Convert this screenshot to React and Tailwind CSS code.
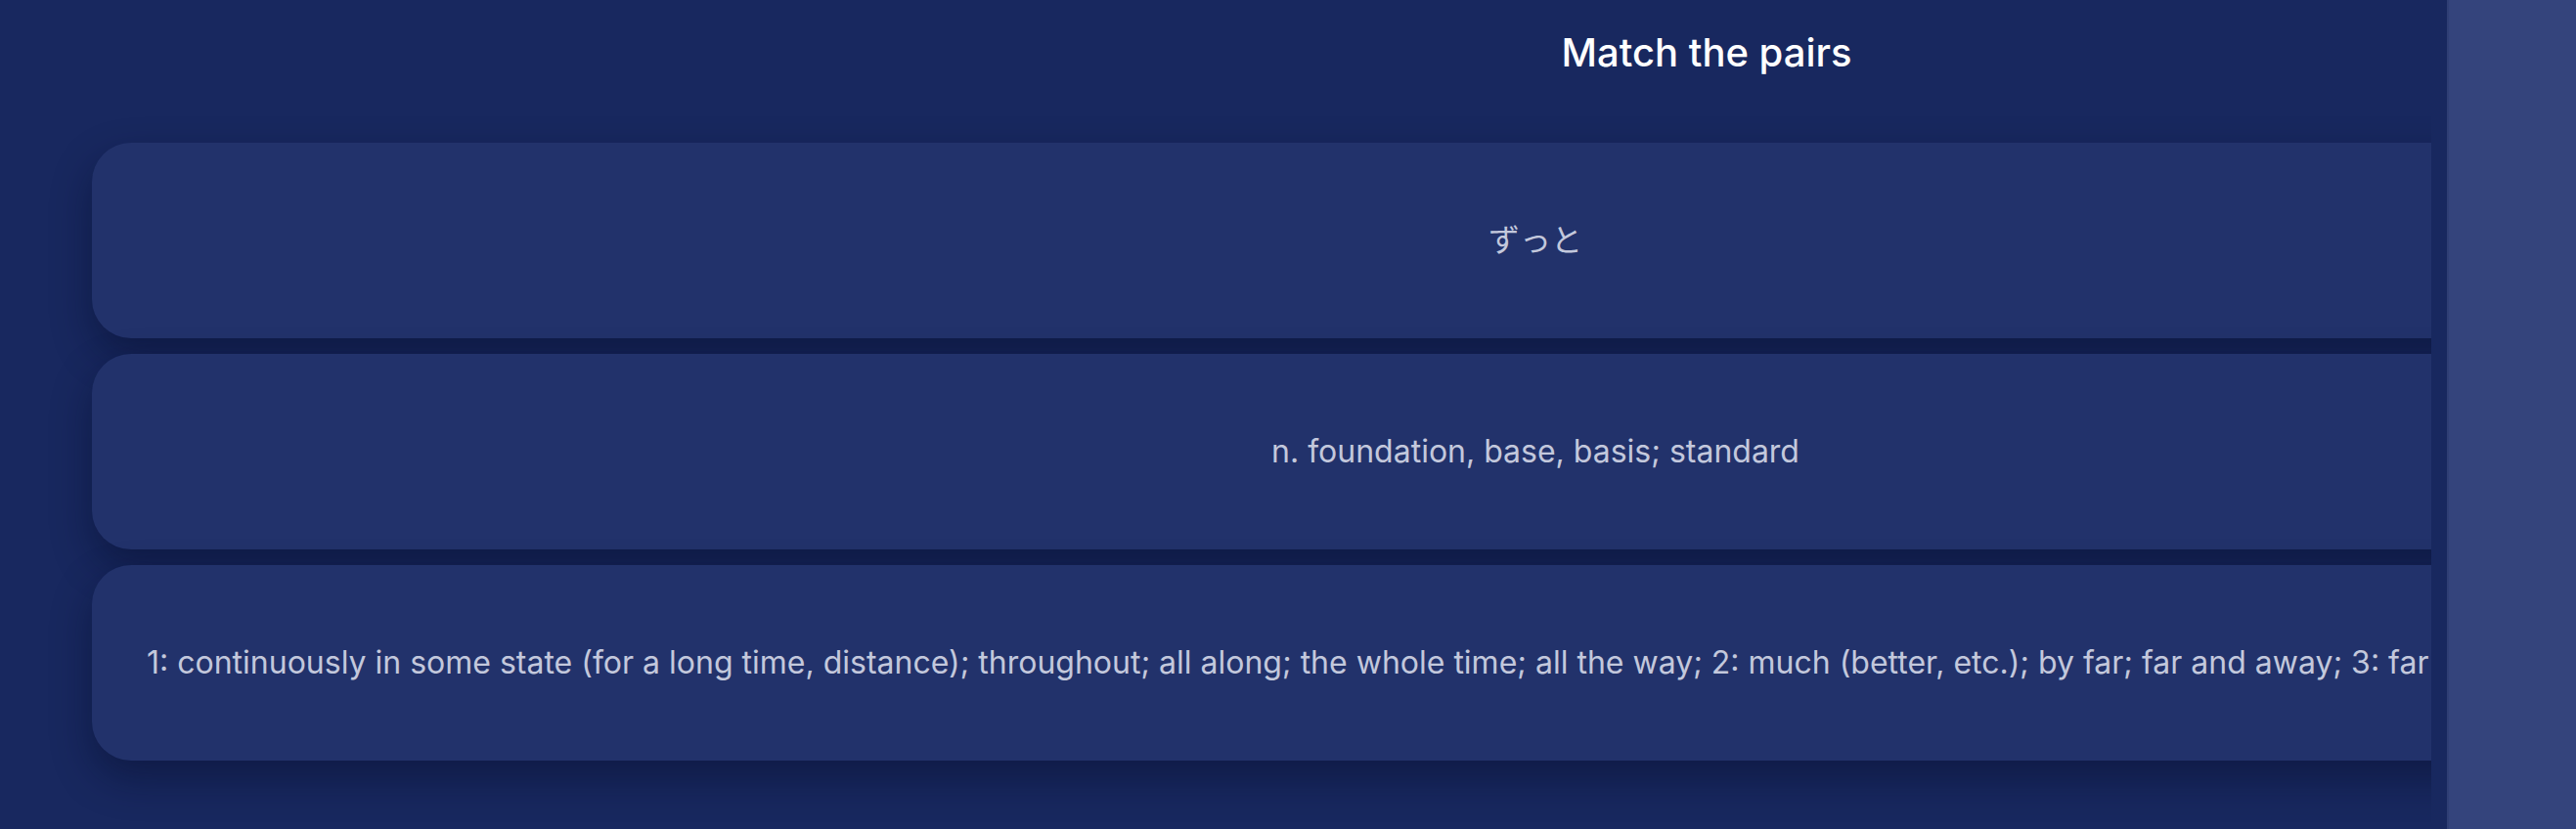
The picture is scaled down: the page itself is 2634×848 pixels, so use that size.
import React from 'react';

const pairs = [
    { id: 1, text: 'ずっと', jp: true },
    { id: 2, text: 'n. foundation, base, basis; standard' },
    {
        id: 3,
        long: true,
        text: '1: continuously in some state (for a long time, distance); throughout; all along; the whole time; all the way; 2: much (better, etc.); by far; far and away; 3: far back; long ago; a long way off'
    }
];

const PairCard = ({ item }) => (
    <div className="h-[200px] w-[2952px] shrink-0 rounded-[40px] bg-[#22326b] px-[56px] flex items-center shadow-[0_18px_40px_rgba(5,12,40,0.45)]">
        <div
            className={`w-full whitespace-nowrap text-[32px] text-[#c3c8dc] ${
                item.long ? 'text-left' : 'text-center'
            } ${
                item.jp
                    ? 'font-["Noto_Sans_CJK_JP",sans-serif] leading-[40px] pb-[6px]'
                    : 'font-["Inter",sans-serif] leading-[40px]'
            }`}
        >
            {item.text}
        </div>
    </div>
);

const App = () => {
    return (
        <div className="h-[848px] w-[2634px] flex bg-[#18285f] overflow-hidden">
            <div className="w-[2486px] shrink-0 overflow-hidden">
                <div className="w-[3490px] px-[94px] pt-[30px]">
                    <h1 className="text-center font-['Inter',sans-serif] font-medium text-[40px] leading-[48px] text-white mb-[68px]">
                        Match the pairs
                    </h1>
                    <div className="flex flex-col gap-4">
                        {pairs.map((item) => (
                            <PairCard key={item.id} item={item} />
                        ))}
                    </div>
                </div>
            </div>
            <div className="w-4 shrink-0" />
            <div className="flex-1 bg-[#34447c] border-l-2 border-[#2f3e74]" />
        </div>
    );
};

export default App;
